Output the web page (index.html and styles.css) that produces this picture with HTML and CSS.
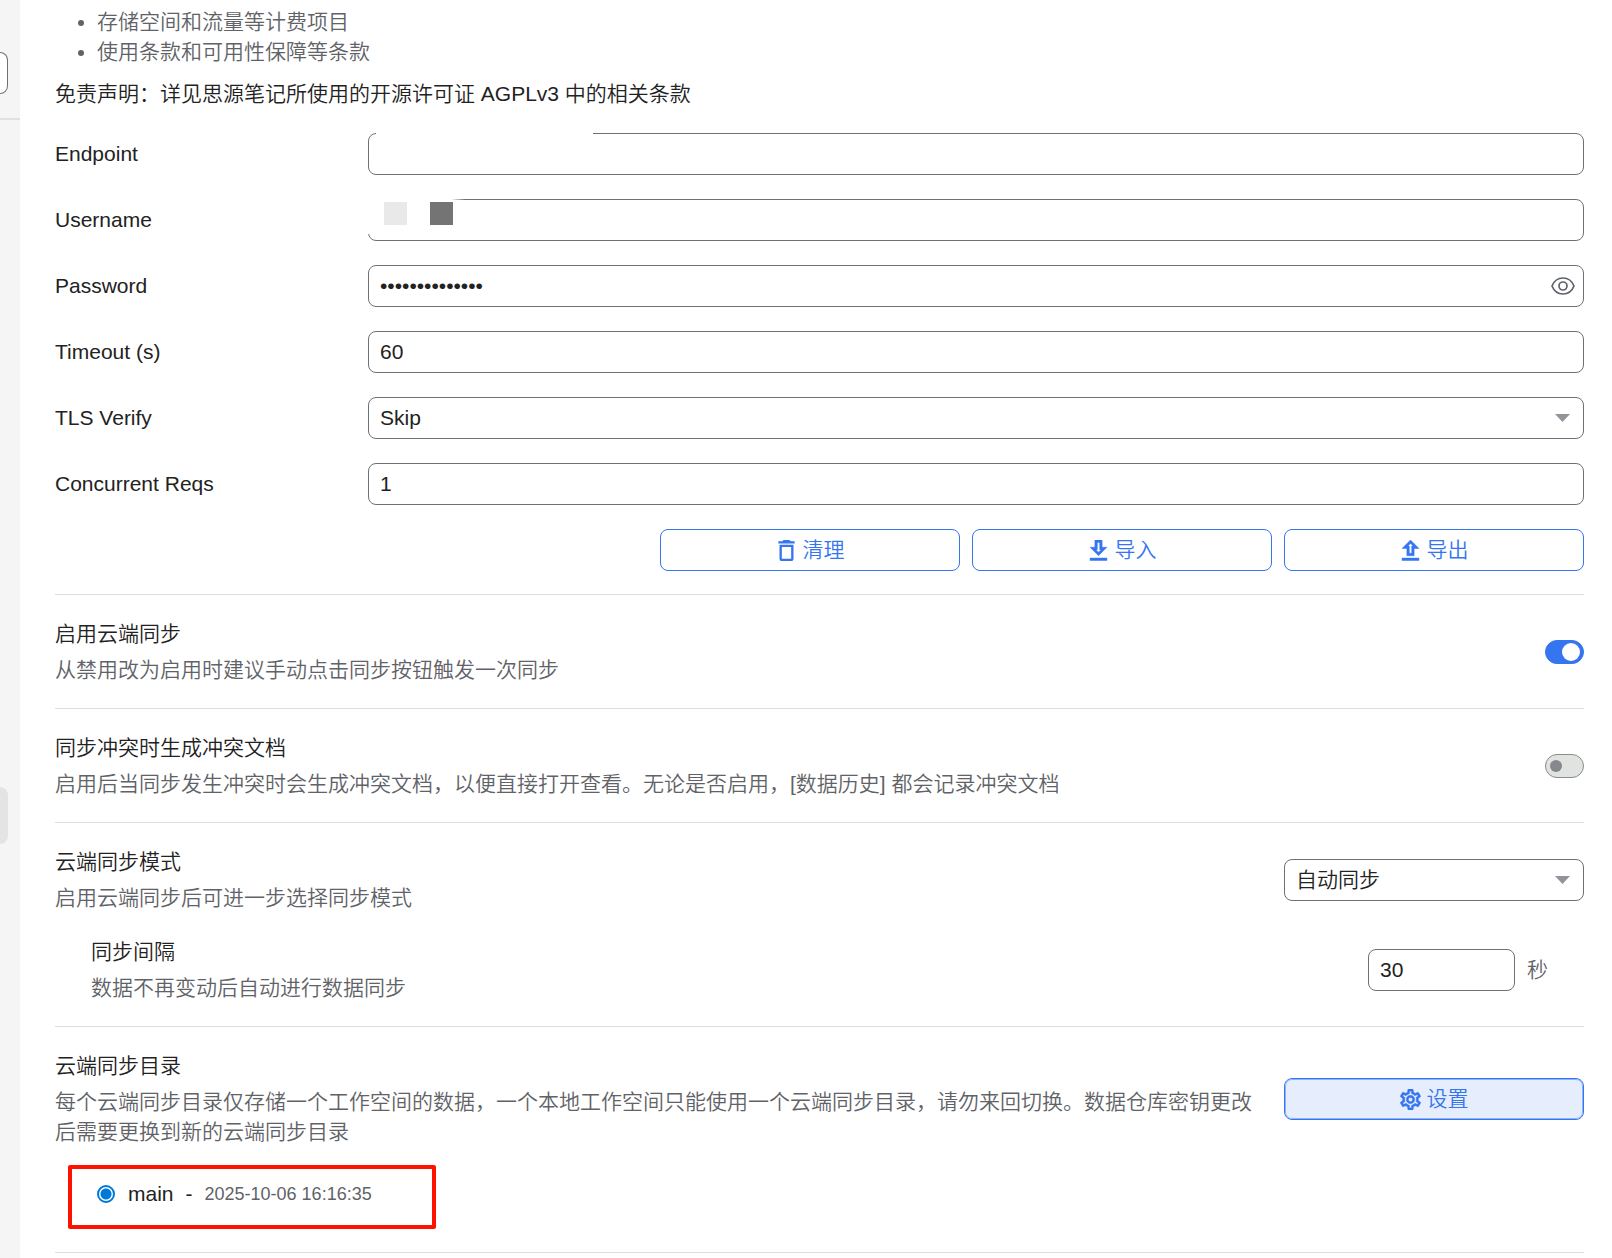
FILE: index.html
```
<!DOCTYPE html>
<html lang="zh-CN">
<head>
    <meta charset="UTF-8">
    <meta name="viewport" content="width=device-width, initial-scale=1.0">
    <title>云端</title>
    <link rel="stylesheet" href="styles.css">
</head>
<body>
<div class="dialog">
    <aside class="side">
        <div class="side-search"><span class="side-box"></span></div>
        <div class="side-list"><span class="side-item"></span></div>
    </aside>
    <main class="content">
        <ul class="tips">
            <li>存储空间和流量等计费项目</li>
            <li>使用条款和可用性保障等条款</li>
        </ul>
        <p class="notice">免责声明：详见思源笔记所使用的开源许可证 AGPLv3 中的相关条款</p>

        <form class="form">
            <label for="endpoint">Endpoint</label>
            <div class="field field-endpoint"><input class="text" id="endpoint" type="text"></div>
            <label for="username">Username</label>
            <div class="field field-username"><input class="text" id="username" type="text"></div>
            <label for="password">Password</label>
            <div class="field">
                <input class="text" id="password" type="password" value="abcdefghijklmn">
                <button class="eye" type="button" aria-label="显示密码">
                    <svg viewBox="0 0 24 24"><path d="M1 12C3 7 7 4 12 4s9 3 11 8c-2 5-6 8-11 8S3 17 1 12z"/><circle cx="12" cy="12" r="4"/></svg>
                </button>
            </div>
            <label for="timeout">Timeout (s)</label>
            <div class="field"><input class="text" id="timeout" type="text" value="60"></div>
            <label for="tls">TLS Verify</label>
            <div class="field">
                <select class="text select" id="tls"><option>Skip</option><option>Verify</option></select>
            </div>
            <label for="reqs">Concurrent Reqs</label>
            <div class="field"><input class="text" id="reqs" type="text" value="1"></div>
        </form>

        <div class="btns">
            <button class="btn">
                <svg viewBox="3 3 18 18"><path d="M6 19c0 1.1.9 2 2 2h8c1.1 0 2-.9 2-2V7H6v12zM8 9h8v10H8V9zm7.5-5l-1-1h-5l-1 1H5v2h14V4h-3.500z"/></svg>清理
            </button>
            <button class="btn">
                <svg class="arrow" viewBox="3.3 3 17.4 17.4"><path d="M19 9h-4V3H9v6H5l7 7 7-7zm-8 2V5h2v6h1.17L12 13.17 9.83 11H11zm-6 7h14v2H5z"/></svg>导入
            </button>
            <button class="btn">
                <svg class="arrow" viewBox="3.3 3 17.4 17.4"><path d="M9 16h6v-6h4l-7-7-7 7h4v6zm3-10.170L14.170 8H13v6h-2V8H9.83L12 5.83zM5 18h14v2H5z"/></svg>导出
            </button>
        </div>

        <section class="item">
            <div class="row">
                <label class="desc" for="sync"><b>启用云端同步</b>从禁用改为启用时建议手动点击同步按钮触发一次同步</label>
                <input class="switch" id="sync" type="checkbox" checked>
            </div>
        </section>
        <section class="item">
            <div class="row">
                <label class="desc" for="conflict"><b>同步冲突时生成冲突文档</b>启用后当同步发生冲突时会生成冲突文档，以便直接打开查看。无论是否启用，[数据历史] 都会记录冲突文档</label>
                <input class="switch" id="conflict" type="checkbox">
            </div>
        </section>
        <section class="item">
            <div class="row">
                <label class="desc" for="mode"><b>云端同步模式</b>启用云端同步后可进一步选择同步模式</label>
                <select class="text select fixed" id="mode"><option>自动同步</option><option>手动同步</option></select>
            </div>
            <div class="row sub">
                <label class="desc" for="interval"><b>同步间隔</b>数据不再变动后自动进行数据同步</label>
                <div class="unit"><input class="text" id="interval" type="text" value="30"><span>秒</span></div>
            </div>
        </section>
        <section class="item">
            <div class="row">
                <div class="desc"><b>云端同步目录</b>每个云端同步目录仅存储一个工作空间的数据，一个本地工作空间只能使用一个云端同步目录，请勿来回切换。数据仓库密钥更改后需要更换到新的云端同步目录</div>
                <button class="btn fixed active">
                    <svg class="gear" viewBox="2 2 20 20"><path d="M19.43 12.98c.04-.32.07-.64.07-.98 0-.34-.03-.66-.07-.98l2.11-1.65c.19-.15.24-.42.12-.64l-2-3.46c-.09-.16-.26-.25-.44-.25-.06 0-.12.01-.17.03l-2.49 1c-.52-.4-1.08-.73-1.69-.98l-.38-2.65C14.46 2.18 14.25 2 14 2h-4c-.25 0-.46.18-.49.42l-.38 2.65c-.61.25-1.17.59-1.69.98l-2.49-1c-.06-.02-.12-.03-.18-.03-.17 0-.34.09-.43.25l-2 3.46c-.13.22-.07.49.12.64l2.11 1.65c-.04.32-.07.65-.07.98 0 .33.03.66.07.98l-2.11 1.65c-.19.15-.24.42-.12.64l2 3.46c.09.16.26.25.44.25.06 0 .12-.01.17-.03l2.49-1c.52.4 1.08.73 1.69.98l.38 2.65c.03.24.24.42.49.42h4c.25 0 .46-.18.49-.42l.38-2.65c.61-.25 1.17-.59 1.69-.98l2.49 1c.06.02.12.03.18.03.17 0 .34-.09.43-.25l2-3.46c.12-.22.07-.49-.12-.64l-2.11-1.65zm-1.98-1.71c.04.31.05.52.05.73 0 .21-.02.43-.05.73l-.14 1.13.89.7 1.08.84-.7 1.21-1.27-.51-1.04-.42-.9.68c-.43.32-.84.56-1.25.73l-1.06.43-.16 1.13-.2 1.35h-1.4l-.19-1.35-.16-1.13-1.06-.43c-.43-.18-.83-.41-1.23-.71l-.91-.7-1.06.43-1.27.51-.7-1.21 1.08-.84.89-.7-.14-1.13c-.03-.31-.05-.54-.05-.74s.02-.43.05-.73l.14-1.13-.89-.7-1.08-.84.7-1.21 1.27.51 1.04.42.9-.68c.43-.32.84-.56 1.25-.73l1.06-.43.16-1.13.2-1.35h1.39l.19 1.35.16 1.13 1.06.43c.43.18.83.41 1.23.71l.91.7 1.06-.43 1.27-.51.7 1.21-1.07.85-.89.7.14 1.13zM12 8c-2.21 0-4 1.79-4 4s1.79 4 4 4 4-1.79 4-4-1.79-4-4-4zm0 6c-1.1 0-2-.9-2-2s.9-2 2-2 2 .9 2 2-.9 2-2 2z"/></svg>设置
                </button>
            </div>
            <div class="dirs">
                <label class="dir"><input class="radio" type="radio" name="dir" checked><span>main</span><span class="dash">-</span><span class="time">2025-10-06 16:16:35</span></label>
            </div>
        </section>
    </main>
</div>
</body>
</html>
```
FILE: styles.css
```
*, *::before, *::after {
    box-sizing: border-box;
}
body {
    margin: 0;
    background-color: #fff;
    color: #222;
    font: 21px/30px "Liberation Sans", Arial, "Noto Sans CJK SC", sans-serif;
    font-weight: 350;
}
input, select, button {
    margin: 0;
    font: inherit;
    color: inherit;
}
.dialog {
    display: flex;
    min-height: 100vh;
    overflow: hidden;
}
.side {
    flex: none;
    width: 20px;
    background-color: #f5f5f5;
}
.side-search {
    height: 120px;
    padding-top: 52px;
    border-bottom: 2px solid #e0e0e0;
}
.side-box {
    display: block;
    width: 8px;
    height: 42px;
    border: 1px solid #6e7075;
    border-left: 0;
    border-radius: 0 8px 8px 0;
    background-color: #fff;
}
.side-list {
    padding-top: 667px;
}
.side-item {
    display: block;
    width: 8px;
    height: 57px;
    border-radius: 0 8px 8px 0;
    background-color: #e4e4e4;
}
.content {
    flex: 1;
    min-width: 0;
    padding: 7px 28px 0 35px;
}
.tips {
    margin: 0 0 12px;
    padding-left: 42px;
    color: #5f6368;
}
.notice {
    margin: 0 0 24px;
}
.form {
    display: grid;
    grid-template-columns: 301px 1fr;
    gap: 24px 12px;
    align-items: center;
}
.field {
    position: relative;
}
.text {
    display: block;
    width: 100%;
    height: 42px;
    padding: 0 11px;
    border: 1px solid #6e7075;
    border-radius: 8px;
    background-color: #fff;
    outline: none;
}
.select {
    appearance: none;
    background: #fff url("data:image/svg+xml,%3Csvg xmlns='http://www.w3.org/2000/svg' width='15' height='8'%3E%3Cpath fill='%23919499' d='M0 0h15L7.5 8z'/%3E%3C/svg%3E") no-repeat right 13px center;
}
/* hidden account data */
.field-endpoint::before {
    content: "";
    position: absolute;
    left: 8px;
    top: 0;
    width: 217px;
    height: 2px;
    background-color: #fff;
}
.field-username::before {
    content: "";
    position: absolute;
    left: 0;
    top: 0;
    width: 97px;
    height: 35px;
    background: linear-gradient(to right, #fff 83px, transparent);
}
.field-username::after {
    content: "";
    position: absolute;
    left: 16px;
    top: 3px;
    width: 69px;
    height: 23px;
    background: linear-gradient(to right, #e9e9e9 23px, #fff 23px, #fff 46px, #747474 46px);
}
.eye {
    position: absolute;
    right: 9px;
    top: 9px;
    width: 24px;
    height: 24px;
    padding: 0;
    border: 0;
    background: none;
}
.eye svg {
    display: block;
    width: 24px;
    height: 24px;
    fill: none;
    stroke: #5f6368;
    stroke-width: 1.7;
}
.btns {
    display: flex;
    justify-content: flex-end;
    gap: 12px;
    margin: 24px 0 23px;
}
.btn {
    display: flex;
    align-items: center;
    justify-content: center;
    gap: 6px;
    width: 300px;
    height: 42px;
    padding: 0;
    border: 1px solid #3575f0;
    border-radius: 8px;
    background-color: #fff;
    color: #3575f0;
    cursor: pointer;
}
.btn svg {
    width: 21px;
    height: 21px;
    fill: currentColor;
}
.btn .arrow, .btn .gear {
    stroke: currentColor;
    stroke-width: .4;
}
.active {
    background-color: #e6edfd;
    outline: 1px solid #8fb3f7;
    outline-offset: -2px;
}
.item {
    padding: 24px 0 23px;
    border-top: 1px solid #dedede;
}
.item:last-child {
    border-bottom: 1px solid #dedede;
}
.row {
    display: flex;
    align-items: center;
    gap: 24px;
}
.desc {
    flex: 1;
    color: #5f6368;
}
.desc b {
    display: block;
    margin-bottom: 6px;
    font-weight: inherit;
    color: #222;
}
.fixed {
    flex: none;
    width: 300px;
}
.sub {
    margin-top: 24px;
    padding: 0 36px;
}
.unit {
    display: flex;
    align-items: center;
    gap: 12px;
    color: #5f6368;
}
.unit .text {
    width: 147px;
    color: #222;
}
.switch {
    appearance: none;
    display: flex;
    align-items: center;
    width: 39px;
    height: 24px;
    padding: 0 4px;
    border: 1px solid #898c90;
    border-radius: 12px;
    background-color: #e1e3e1;
}
.switch::before {
    content: "";
    width: 12px;
    height: 12px;
    border-radius: 50%;
    background-color: #85888c;
}
.switch:checked {
    justify-content: flex-end;
    padding: 0 3px;
    border-color: #3575f0;
    background-color: #3575f0;
}
.switch:checked::before {
    width: 18px;
    height: 18px;
    background-color: #fff;
}
.dirs {
    position: relative;
    padding: 32px 42px 20px;
}
/* red frame round the directory */
.dirs::after {
    content: "";
    position: absolute;
    left: 13px;
    top: 18px;
    width: 368px;
    height: 64px;
    border: 4px solid #ff1100;
    border-radius: 2px;
    pointer-events: none;
}
.dir {
    display: flex;
    align-items: center;
}
.radio {
    appearance: none;
    width: 18px;
    height: 18px;
    margin-right: 13px;
    border: 2px solid #0078d7;
    border-radius: 50%;
    background: radial-gradient(circle, #0078d7 5px, #fff 6px);
}
.dash {
    margin: 0 12px;
}
.time {
    font-size: 18px;
    color: #5f6368;
}
```
